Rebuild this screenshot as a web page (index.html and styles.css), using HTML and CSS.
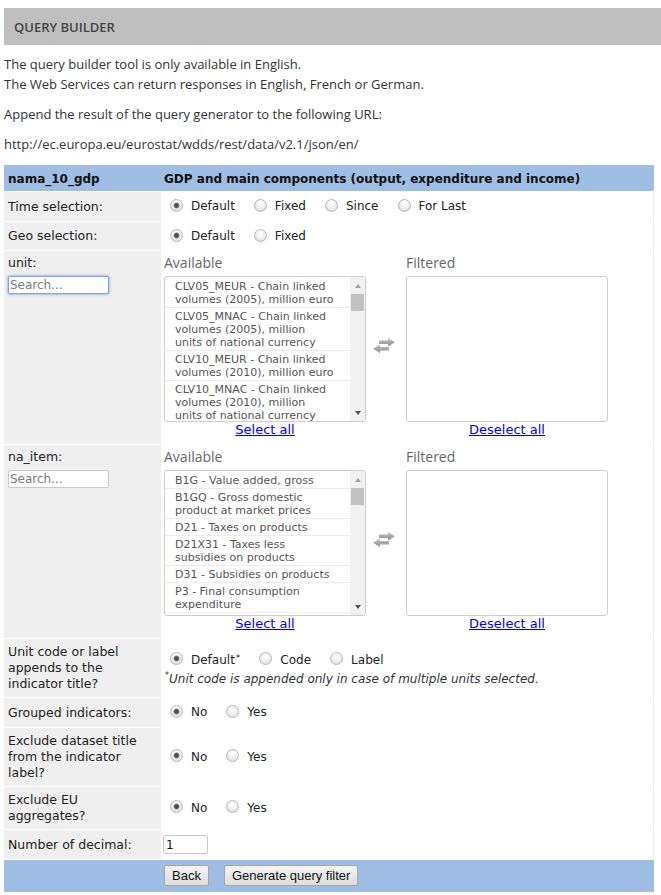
FILE: index.html
```html
<!DOCTYPE html>
<html>
<head>
<meta charset="utf-8">
<title>Query builder</title>
<link rel="stylesheet" href="styles.css">
</head>
<body>
<div class="bar">QUERY BUILDER</div>
<p class="intro first">The query builder tool is only available in English.<br>The Web Services can return responses in English, French or German.</p>
<p class="intro">Append the result of the query generator to the following URL:</p>
<p class="intro">http://ec.europa.eu/eurostat/wdds/rest/data/v2.1/json/en/</p>

<div class="qb">
  <div class="row head">
    <div class="lab">nama_10_gdp</div>
    <div class="val">GDP and main components (output, expenditure and income)</div>
  </div>

  <div class="row">
    <div class="lab">Time selection:</div>
    <div class="val">
      <label class="opt"><input type="radio" class="rd" name="time" checked>Default</label>
      <label class="opt"><input type="radio" class="rd" name="time">Fixed</label>
      <label class="opt"><input type="radio" class="rd" name="time">Since</label>
      <label class="opt"><input type="radio" class="rd" name="time">For Last</label>
    </div>
  </div>

  <div class="row">
    <div class="lab">Geo selection:</div>
    <div class="val short">
      <label class="opt"><input type="radio" class="rd" name="geo" checked>Default</label>
      <label class="opt"><input type="radio" class="rd" name="geo">Fixed</label>
    </div>
  </div>

  <div class="row">
    <div class="lab top">
      <div>unit:</div>
      <input class="search focused" type="text" placeholder="Search...">
    </div>
    <div class="val pick">
      <div class="col">
        <div class="cap">Available</div>
        <div class="lbox">
          <div class="items">
            <div class="it">CLV05_MEUR - Chain linked volumes (2005), million euro</div>
            <div class="it">CLV05_MNAC - Chain linked volumes (2005), million units of national currency</div>
            <div class="it">CLV10_MEUR - Chain linked volumes (2010), million euro</div>
            <div class="it">CLV10_MNAC - Chain linked volumes (2010), million units of national currency</div>
          </div>
          <div class="sb"><span class="up"></span><span class="thumb"></span><span class="dn"></span></div>
        </div>
        <a class="lnk" href="#">Select all</a>
      </div>
      <div class="swap">
        <svg width="22" height="15" viewBox="0 0 22 15">
          <defs><linearGradient id="ag" x1="0" y1="0" x2="0" y2="1"><stop offset="0" stop-color="#c6c6c6"/><stop offset="1" stop-color="#8a8a8a"/></linearGradient></defs>
          <path d="M6 2.5H15V0L22 4.25L15 8.5V6H6Z" fill="url(#ag)"/>
          <path d="M16 9H7V6.5L0 10.75L7 15V12.5H16Z" fill="url(#ag)"/>
        </svg>
      </div>
      <div class="col">
        <div class="cap">Filtered</div>
        <div class="lbox"></div>
        <a class="lnk" href="#">Deselect all</a>
      </div>
    </div>
  </div>

  <div class="row">
    <div class="lab top">
      <div>na_item:</div>
      <input class="search" type="text" placeholder="Search...">
    </div>
    <div class="val pick">
      <div class="col">
        <div class="cap">Available</div>
        <div class="lbox">
          <div class="items">
            <div class="it">B1G - Value added, gross</div>
            <div class="it">B1GQ - Gross domestic product at market prices</div>
            <div class="it">D21 - Taxes on products</div>
            <div class="it">D21X31 - Taxes less subsidies on products</div>
            <div class="it">D31 - Subsidies on products</div>
            <div class="it">P3 - Final consumption expenditure</div>
          </div>
          <div class="sb"><span class="up"></span><span class="thumb"></span><span class="dn"></span></div>
        </div>
        <a class="lnk" href="#">Select all</a>
      </div>
      <div class="swap">
        <svg width="22" height="15" viewBox="0 0 22 15">
          <defs><linearGradient id="ag2" x1="0" y1="0" x2="0" y2="1"><stop offset="0" stop-color="#c6c6c6"/><stop offset="1" stop-color="#8a8a8a"/></linearGradient></defs>
          <path d="M6 2.5H15V0L22 4.25L15 8.5V6H6Z" fill="url(#ag2)"/>
          <path d="M16 9H7V6.5L0 10.75L7 15V12.5H16Z" fill="url(#ag2)"/>
        </svg>
      </div>
      <div class="col">
        <div class="cap">Filtered</div>
        <div class="lbox"></div>
        <a class="lnk" href="#">Deselect all</a>
      </div>
    </div>
  </div>

  <div class="row">
    <div class="lab">Unit code or label appends to the indicator title?</div>
    <div class="val stack">
      <div class="line">
        <label class="opt"><input type="radio" class="rd" name="uc" checked>Default<sup>*</sup></label>
        <label class="opt"><input type="radio" class="rd" name="uc">Code</label>
        <label class="opt"><input type="radio" class="rd" name="uc">Label</label>
      </div>
      <div class="note"><sup>*</sup>Unit code is appended only in case of multiple units selected.</div>
    </div>
  </div>

  <div class="row">
    <div class="lab">Grouped indicators:</div>
    <div class="val">
      <label class="opt"><input type="radio" class="rd" name="gi" checked>No</label>
      <label class="opt"><input type="radio" class="rd" name="gi">Yes</label>
    </div>
  </div>

  <div class="row">
    <div class="lab">Exclude dataset title from the indicator label?</div>
    <div class="val">
      <label class="opt"><input type="radio" class="rd" name="ed" checked>No</label>
      <label class="opt"><input type="radio" class="rd" name="ed">Yes</label>
    </div>
  </div>

  <div class="row">
    <div class="lab">Exclude EU aggregates?</div>
    <div class="val">
      <label class="opt"><input type="radio" class="rd" name="eu" checked>No</label>
      <label class="opt"><input type="radio" class="rd" name="eu">Yes</label>
    </div>
  </div>

  <div class="row">
    <div class="lab">Number of decimal:</div>
    <div class="val"><input class="dec" type="text" value="1"></div>
  </div>

  <div class="row foot">
    <div class="lab"></div>
    <div class="val">
      <button class="btn" type="button">Back</button>
      <button class="btn" type="button">Generate query filter</button>
    </div>
  </div>
</div>
</body>
</html>
```

FILE: styles.css
```css
html, body {
  background: #fff;
}
body {
  margin: 0;
  padding: 8px 0 0 4px;
  font-family: "Open Sans", "DejaVu Sans", sans-serif;
  color: #333;
}

.bar {
  height: 37px;
  background: #bfbfbf;
  display: flex;
  align-items: center;
  padding-left: 10px;
  font-size: 13px;
  font-weight: 600;
  color: #444;
}

.intro {
  margin: 0 0 10px 0;
  font-size: 13px;
  line-height: 20px;
  color: #333;
}
.intro.first {
  margin-top: 9px;
}

.qb {
  width: 650px;
  margin-top: 11px;
  display: flex;
  flex-direction: column;
  gap: 1px;
  font-family: "DejaVu Sans", Verdana, sans-serif;
  font-size: 12px;
  color: #222;
}

.row {
  display: grid;
  grid-template-columns: 157px 1fr;
}

.lab {
  background: #efefef;
  padding: 5px 4px 5px 4px;
  font-size: 12.5px;
  line-height: 16px;
  display: flex;
  align-items: center;
}
.lab.top {
  flex-direction: column;
  align-items: flex-start;
  justify-content: flex-start;
  padding-top: 4px;
}

.val {
  padding: 4px 0 4px 3px;
  display: flex;
  align-items: center;
  border-right: 1px solid #ececec;
  min-height: 21px;
}
.val.short {
  padding-bottom: 3px;
}

.head .lab,
.head .val {
  background: #9ebee4;
  font-size: 12px;
  font-weight: bold;
  color: #111;
  height: 26px;
  box-sizing: border-box;
  padding-top: 3px;
  padding-bottom: 1px;
  border-right: none;
}
.foot .lab,
.foot .val {
  background: #9ebee4;
  border-right: none;
}
.foot .val {
  padding: 5px 0 6px 3px;
}

.opt {
  display: inline-flex;
  align-items: center;
  line-height: 21px;
  margin-right: 13px;
  white-space: nowrap;
}
.opt sup {
  font-size: 9px;
  line-height: 0;
  position: relative;
  top: -2px;
  vertical-align: top;
  margin-left: 1px;
}

.rd {
  appearance: none;
  -webkit-appearance: none;
  width: 13px;
  height: 13px;
  border-radius: 50%;
  border: 1px solid #b8b8b8;
  box-sizing: border-box;
  background: radial-gradient(circle at 50% 35%, #ffffff 0, #f2f2f2 40%, #d6d6d6 100%);
  margin: 0 8px 3px 6px;
  flex: none;
}
.rd:checked {
  background:
    radial-gradient(circle at 50% 50%, #4e4e4e 0, #4e4e4e 1.8px, #8f8f8f 2.6px, rgba(143,143,143,0) 3.4px),
    radial-gradient(circle at 50% 35%, #ffffff 0, #f2f2f2 40%, #d6d6d6 100%);
}

.stack {
  flex-direction: column;
  align-items: flex-start;
  justify-content: center;
}
.stack .line {
  display: flex;
  align-items: center;
}
.note {
  font-style: italic;
  font-size: 12px;
  line-height: 16px;
  color: #333;
  padding-left: 1px;
}
.note sup {
  font-size: 8px;
  line-height: 0;
}

.search {
  margin-top: 5px;
  width: 101px;
  height: 18px;
  box-sizing: border-box;
  border: 1px solid #c8c8c8;
  border-radius: 2px;
  padding: 0 1px;
  font-family: "DejaVu Sans", sans-serif;
  font-size: 12px;
  color: #333;
  background: #fff;
  outline: none;
}
.search::placeholder {
  color: #7a7a7a;
}
.search.focused {
  border-color: #7ea6d8;
  box-shadow: 0 0 2px 1px rgba(110, 160, 225, 0.55);
}

.pick {
  align-items: flex-start;
  padding: 4px 0 6px 3px;
}
.col {
  width: 202px;
  display: flex;
  flex-direction: column;
}
.cap {
  font-family: "Open Sans", sans-serif;
  font-size: 14px;
  line-height: 16px;
  color: #666;
}
.lbox {
  margin-top: 5px;
  height: 146px;
  box-sizing: border-box;
  border: 1px solid #cdcdcd;
  border-radius: 3px;
  display: flex;
  overflow: hidden;
  background: #fff;
}
.items {
  flex: 1;
  overflow: hidden;
  padding-top: 1px;
}
.it {
  padding: 2px 15.5px 1px 10px;
  font-size: 11px;
  line-height: 13px;
  color: #555;
  border-bottom: 1px solid #ebebeb;
}
.sb {
  width: 15px;
  flex: none;
  background: #f1f1f1;
  display: flex;
  flex-direction: column;
  align-items: center;
}
.sb .up {
  margin-top: 7px;
  width: 0;
  height: 0;
  border-left: 3.5px solid transparent;
  border-right: 3.5px solid transparent;
  border-bottom: 4px solid #a3a3a3;
}
.sb .thumb {
  margin-top: 6px;
  width: 13px;
  height: 17px;
  background: #c1c1c1;
}
.sb .dn {
  margin-top: auto;
  margin-bottom: 6px;
  width: 0;
  height: 0;
  border-left: 3.5px solid transparent;
  border-right: 3.5px solid transparent;
  border-top: 4px solid #505050;
}
.lnk {
  text-align: center;
  font-size: 13px;
  line-height: 16px;
  color: #0000ee;
  text-decoration: underline;
}
.swap {
  width: 40px;
  padding: 83px 0 0 7px;
  box-sizing: border-box;
  line-height: 0;
}

.dec {
  width: 45px;
  height: 19px;
  box-sizing: border-box;
  border: 1px solid #c8c8c8;
  border-radius: 2px;
  padding: 0 2px;
  font-family: "DejaVu Sans", sans-serif;
  font-size: 12px;
  color: #111;
  margin-left: -1px;
}

.btn {
  height: 21px;
  padding: 0 7px;
  margin-right: 15px;
  border: 1px solid #a6a6a6;
  border-radius: 2px;
  background: linear-gradient(#f5f5f5, #dcdcdc);
  font-family: "Liberation Sans", Arial, sans-serif;
  font-size: 13px;
  color: #111;
}
```
